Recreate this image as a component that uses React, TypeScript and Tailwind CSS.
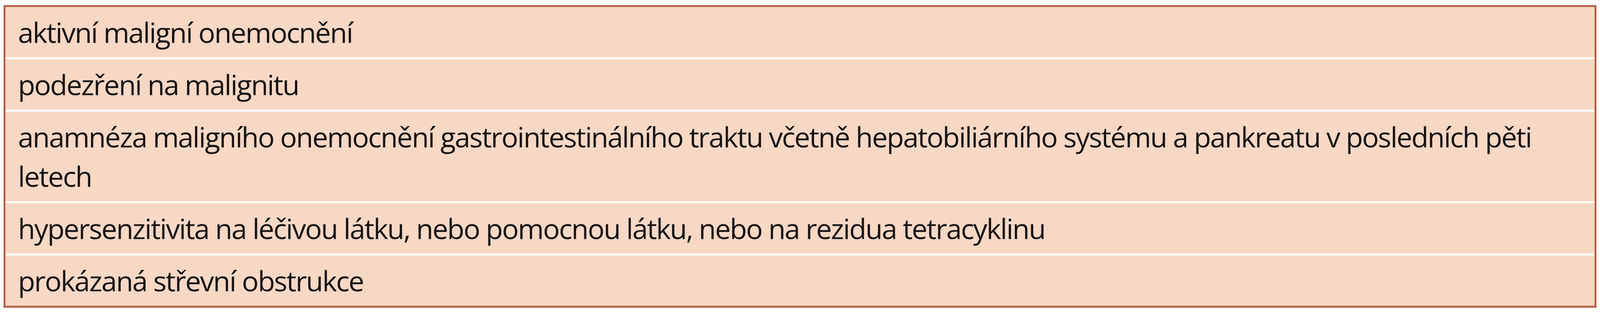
const rows = [
  "aktivní maligní onemocnění",
  "podezření na malignitu",
  "anamnéza maligního onemocnění gastrointestinálního traktu včetně hepatobiliárního systému a pankreatu v posledních pěti letech",
  "hypersenzitivita na léčivou látku, nebo pomocnou látku, nebo na rezidua tetracyklinu",
  "prokázaná střevní obstrukce",
];

export default function App() {
  return (
    <div className="min-h-screen bg-white pt-[13px] pr-[9px] pl-[9px]">
      <div className="flex flex-col gap-[5px] border-[5px] border-[#b8644a] bg-white">
        {rows.map((text) => (
          <div
            key={text}
            className="bg-[#f7d8c5] py-[14px] pl-[32px] pr-[20px] font-['Open_Sans',sans-serif] text-[72px] leading-[101px] tracking-[-2.5px] text-[#181313]"
          >
            {text}
          </div>
        ))}
      </div>
    </div>
  );
}
